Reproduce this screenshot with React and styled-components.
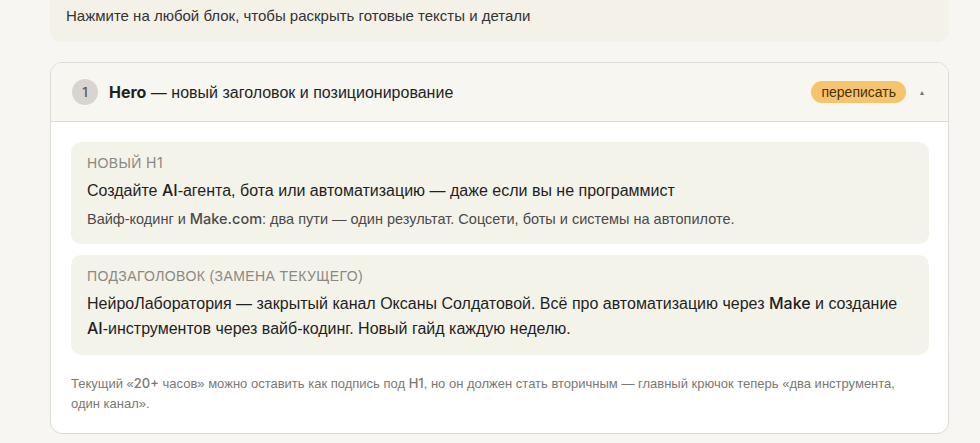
import React from "react";
import styled, { createGlobalStyle } from "styled-components";

const Global = createGlobalStyle`
  html, body { margin: 0; padding: 0; background: #f7f6f2; }
  body { font-family: "Liberation Sans", Arial, sans-serif; color: #222; }
`;

const Page = styled.div`
  width: 899px;
  margin-left: 50px;
  display: flex;
  flex-direction: column;
  gap: 20px;
`;

const Hint = styled.div`
  background: #f3f1e8;
  border-radius: 0 0 12px 12px;
  padding: 5px 16px 15px;
  font-size: 15px;
  line-height: 22px;
  color: #333;
`;

const Lat = styled.span`
  font-family: Inter, "Liberation Sans", sans-serif;
  font-weight: ${(p) => (p.$bold ? 700 : p.$regular ? 400 : 500)};
`;

const Card = styled.div`
  background: #fff;
  border: 1px solid #dcdad4;
  border-radius: 12px;
  overflow: hidden;
`;

const Header = styled.div`
  height: 58px;
  background: #f7f6f0;
  border-bottom: 1px solid #dcdad4;
  display: flex;
  align-items: center;
  padding: 0 22px 0 21px;
  gap: 11px;
`;

const Num = styled.div`
  width: 26px;
  height: 26px;
  border-radius: 50%;
  background: #d8d5cf;
  display: flex;
  align-items: center;
  justify-content: center;
  font-family: Inter, "Liberation Sans", sans-serif;
  font-size: 13px;
  font-weight: 500;
  color: #555;
`;

const Title = styled.div`
  flex: 1;
  font-size: 16px;
  color: #1f1f1f;
`;

const Tag = styled.span`
  background: #f7c46e;
  color: #4a3005;
  font-size: 14px;
  height: 22px;
  line-height: 22px;
  padding: 0 10px;
  border-radius: 11px;
`;

const Caret = styled.span`
  font-size: 7px;
  color: #777;
  margin-left: 1px;
  width: 8px;
  text-align: center;
`;

const Body = styled.div`
  padding: 20px 19px 19px 20px;
  display: flex;
  flex-direction: column;
  gap: 11px;
`;

const Block = styled.div`
  background: #f4f3ea;
  border-radius: 10px;
  padding: 12px 16px 14px;
`;

const Label = styled.div`
  font-size: 14px;
  letter-spacing: 0.4px;
  line-height: 18px;
  color: #8a8882;
  text-transform: uppercase;
  margin-bottom: 6px;
`;

const Main = styled.div`
  font-size: 16px;
  line-height: 25px;
  color: #1f1f1f;
`;

const Sub = styled.div`
  font-size: 14.5px;
  line-height: 21px;
  color: #4a4a4a;
  margin-top: 5px;
`;

const Note = styled.div`
  font-size: 13px;
  line-height: 20px;
  color: #7a7873;
  margin-top: 7px;
  padding-right: 10px;
`;

export default function App() {
  return (
    <>
      <Global />
      <Page>
        <Hint>Нажмите на любой блок, чтобы раскрыть готовые тексты и детали</Hint>
        <Card>
          <Header>
            <Num>1</Num>
            <Title>
              <Lat $bold>Hero</Lat> — новый заголовок и позиционирование
            </Title>
            <Tag>переписать</Tag>
            <Caret>▲</Caret>
          </Header>
          <Body>
            <Block>
              <Label>Новый <Lat $regular>H1</Lat></Label>
              <Main>
                Создайте <Lat>AI</Lat>-агента, бота или автоматизацию — даже если вы не программист
              </Main>
              <Sub>
                Вайф-кодинг и <Lat>Make.com</Lat>: два пути — один результат. Соцсети, боты и системы на автопилоте.
              </Sub>
            </Block>
            <Block>
              <Label>Подзаголовок (замена текущего)</Label>
              <Main>
                НейроЛаборатория — закрытый канал Оксаны Солдатовой. Всё про автоматизацию через <Lat>Make</Lat> и создание <Lat>AI</Lat>-инструментов через вайб-кодинг. Новый гайд каждую неделю.
              </Main>
            </Block>
            <Note>
              Текущий «<Lat>20+</Lat> часов» можно оставить как подпись под <Lat>H1</Lat>, но он должен стать вторичным — главный крючок теперь «два инструмента, один канал».
            </Note>
          </Body>
        </Card>
      </Page>
    </>
  );
}
